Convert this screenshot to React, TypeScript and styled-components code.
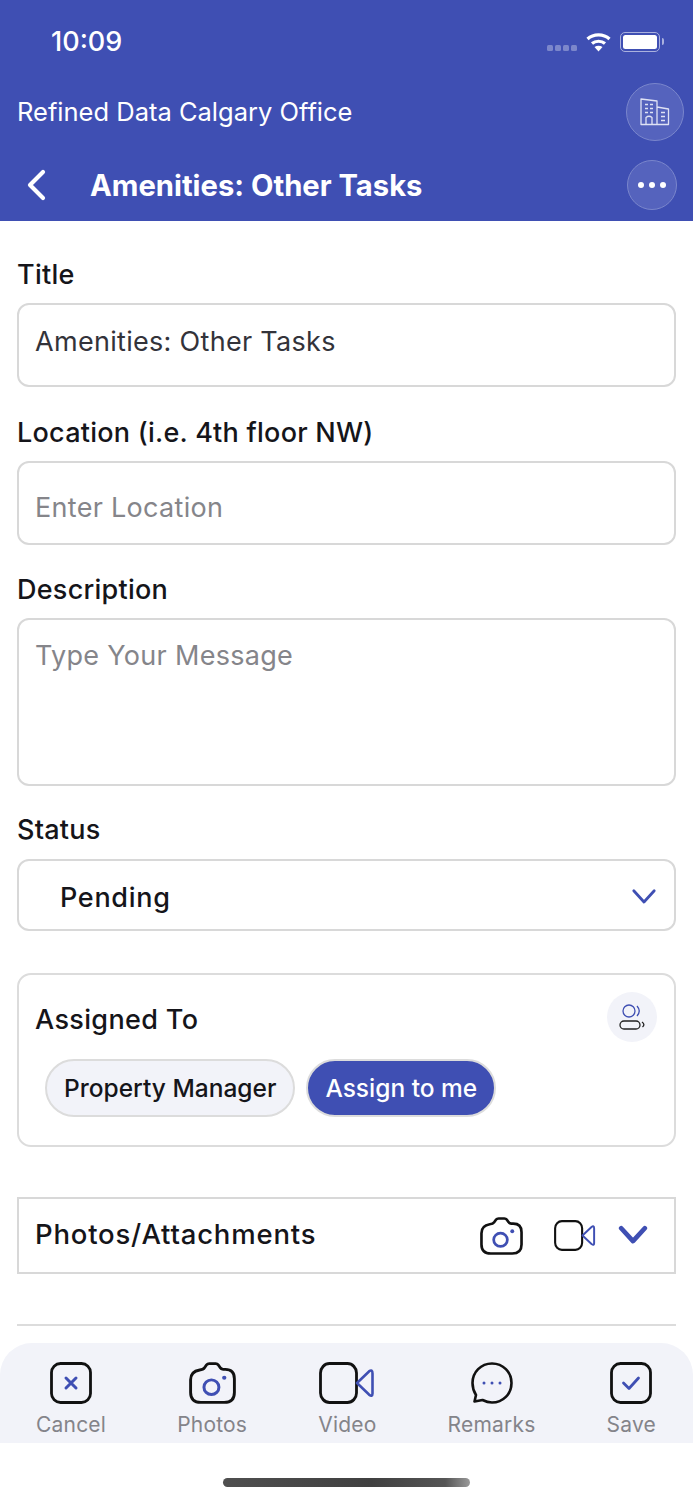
import styled, { createGlobalStyle } from 'styled-components'

const BLUE = '#3f4fb3'

const GlobalStyle = createGlobalStyle`
  html, body {
    margin: 0;
    padding: 0;
    background: #fff;
  }
  * {
    box-sizing: border-box;
  }
`

const CameraIcon = ({ w, h }: { w: number; h: number }) => (
  <svg width={w} height={h} viewBox="0 0 44 40" fill="none" preserveAspectRatio="none">
    <path
      d="M14.5 5.5 L16.5 2.6 Q17.3 1.5 19 1.5 H25 Q26.5 1.5 27.3 2.6 L29.3 5.5 Q30 6.8 32 7 H34 Q42.5 7 42.5 16 V29 Q42.5 38.5 33 38.5 H11 Q1.5 38.5 1.5 29 V17 Q1.5 9 10 7.6 Q13.3 7.4 14.5 5.5 Z"
      stroke="#111"
      strokeWidth="2.7"
      strokeLinejoin="round"
    />
    <circle cx="21" cy="24" r="7" stroke={BLUE} strokeWidth="2.8" />
    <circle cx="33" cy="15" r="2" fill={BLUE} />
  </svg>
)

const VideoIcon = ({ w, h }: { w: number; h: number }) => (
  <svg width={w} height={h} viewBox="0 0 56 40" fill="none" preserveAspectRatio="none">
    <rect x="1.5" y="1.5" width="36" height="37" rx="9" stroke="#111" strokeWidth="2.8" />
    <path
      d="M38 20 L50 9 Q53.5 6.5 53.5 11 V30 Q53.5 33.5 50 31 Z"
      stroke={BLUE}
      strokeWidth="2.6"
      strokeLinejoin="round"
    />
  </svg>
)

const Chevron = ({ size, stroke }: { size: number; stroke: number }) => (
  <svg width={size} height={size * 0.68} viewBox="0 0 28 19" fill="none">
    <path
      d="M3 3 L14 15 L25 3"
      stroke={BLUE}
      strokeWidth={stroke}
      strokeLinecap="round"
      strokeLinejoin="round"
    />
  </svg>
)

const BoxIcon = ({ kind }: { kind: 'x' | 'check' }) => (
  <svg width="42" height="42" viewBox="0 0 42 42" fill="none">
    <rect x="1.5" y="1.5" width="39" height="39" rx="9" stroke="#111" strokeWidth="2.8" />
    {kind === 'x' ? (
      <path d="M16 16 L26 26 M26 16 L16 26" stroke={BLUE} strokeWidth="3" strokeLinecap="round" />
    ) : (
      <path
        d="M13.5 21 L19 26.5 L28.5 16"
        stroke={BLUE}
        strokeWidth="2.8"
        strokeLinecap="round"
        strokeLinejoin="round"
      />
    )}
  </svg>
)

const BubbleIcon = () => (
  <svg width="42" height="42" viewBox="0 0 42 42" fill="none">
    <path
      d="M21 1.5 C32 1.5 40.5 10 40.5 21 C40.5 32 32 40.5 21 40.5 C17.5 40.5 14.5 39.5 11.5 38 L3.5 39.5 L5 33 C2.8 29.5 1.5 25.5 1.5 21 C1.5 10 10 1.5 21 1.5 Z"
      stroke="#111"
      strokeWidth="2.6"
      strokeLinejoin="round"
    />
    <circle cx="13" cy="21" r="1.5" fill={BLUE} />
    <circle cx="21" cy="21" r="1.5" fill={BLUE} />
    <circle cx="29" cy="21" r="1.5" fill={BLUE} />
  </svg>
)

const BuildingIcon = () => (
  <svg width="30" height="29" viewBox="0 0 30 28" fill="none" stroke="#dfe2f4" strokeWidth="1.3">
    <path d="M1 27 V1.5 L17 3.5 V27 Z M17 9.5 L28.5 11.5 V27 H1" strokeLinejoin="round" />
    <path d="M6 27 V20 Q9 17.5 12 20 V27" />
    <path
      d="M5 7 H8 M10 7 H13 M5 11 H8 M10 11 H13 M5 15 H8 M10 15 H13 M21 15 H25 M21 19 H25 M21 23 H25"
      strokeWidth="1.6"
    />
  </svg>
)

const UsersIcon = () => (
  <svg width="28" height="26" viewBox="0 0 28 26" fill="none">
    <ellipse cx="11" cy="7" rx="6" ry="6" stroke={BLUE} strokeWidth="1.3" />
    <path d="M19 2 Q23.5 7 19 12" stroke={BLUE} strokeWidth="1.3" />
    <rect x="2" y="17" width="20" height="8" rx="4" stroke="#222" strokeWidth="1.3" />
    <path d="M24 18 Q27.5 20.5 24.5 23" stroke="#222" strokeWidth="1.3" />
  </svg>
)

const WifiIcon = () => (
  <svg width="27" height="20" viewBox="0 0 26 20" fill="none" stroke="#fff" strokeWidth="3.2">
    <path d="M2 7 C8 1.5 18 1.5 24 7" />
    <path d="M6.5 11.5 C10 8.5 16 8.5 19.5 11.5" />
    <path d="M13 19.5 L9 15 C11.5 13.4 14.5 13.4 17 15 Z" fill="#fff" stroke="none" />
  </svg>
)

const Page = styled.div`
  width: 693px;
  height: 1500px;
  display: flex;
  flex-direction: column;
  background: #fff;
  overflow: hidden;
  font-family: Inter, 'Liberation Sans', sans-serif;
  color: #15151a;
`

const Header = styled.header`
  height: 221px;
  flex: none;
  background: ${BLUE};
  color: #fff;
  display: flex;
  flex-direction: column;
`

const StatusBar = styled.div`
  height: 82px;
  padding: 0 33px 0 51px;
  display: flex;
  align-items: center;
  justify-content: space-between;
`

const Clock = styled.span`
  font-size: 27px;
  font-weight: 500;
`

const StatusIcons = styled.div`
  display: flex;
  align-items: center;
  gap: 8px;
  margin-top: 2px;
`

const SignalDots = styled.div`
  display: flex;
  gap: 2px;
  margin-top: 12px;
`

const SignalDot = styled.i`
  width: 6px;
  height: 6px;
  border-radius: 1.5px;
  background: #7c87cb;
`

const Battery = styled.div`
  width: 40px;
  height: 20px;
  border: 1.5px solid #aab1de;
  border-radius: 5px;
  padding: 2px;
  position: relative;

  &::before {
    content: '';
    display: block;
    height: 100%;
    background: #fff;
    border-radius: 2.5px;
  }

  &::after {
    content: '';
    position: absolute;
    right: -5px;
    top: 5px;
    width: 2px;
    height: 7px;
    border-radius: 0 2px 2px 0;
    background: #aab1de;
  }
`

const OfficeRow = styled.div`
  height: 59px;
  padding: 0 9px 0 17px;
  display: flex;
  align-items: center;
  justify-content: space-between;
`

const OfficeName = styled.span`
  font-size: 25.5px;
  font-weight: 400;
  margin-bottom: 1px;
`

const RoundButton = styled.div<{ $size: number }>`
  width: ${(p) => p.$size}px;
  height: ${(p) => p.$size}px;
  border-radius: 50%;
  background: #5563bd;
  border: 1.5px solid #7a86cc;
  display: flex;
  align-items: center;
  justify-content: center;
  gap: 5px;
`

const NavRow = styled.div`
  height: 50px;
  margin-top: 19px;
  padding: 0 16px 0 26px;
  display: flex;
  align-items: center;
`

const NavTitle = styled.span`
  flex: 1;
  margin-left: 44px;
  font-size: 29.2px;
  font-weight: 700;
`

const Dot = styled.i`
  width: 6px;
  height: 6px;
  border-radius: 50%;
  background: #fff;
`

const Form = styled.main`
  flex: 1;
  padding: 0 17px;
  display: flex;
  flex-direction: column;
`

const Label = styled.div<{ $top: number }>`
  margin-top: ${(p) => p.$top}px;
  height: 38px;
  display: flex;
  align-items: center;
  font-size: 27px;
  font-weight: 500;
  letter-spacing: 0.25px;
  color: #15151a;
`

const Field = styled.div<{ $height: number; $pad: number; $muted?: boolean }>`
  height: ${(p) => p.$height}px;
  margin-top: 10px;
  border: 2px solid #d8d8d8;
  border-radius: 12px;
  padding: ${(p) => p.$pad}px 16px 0;
  font-size: 27px;
  line-height: 36px;
  letter-spacing: 0.3px;
  color: ${(p) => (p.$muted ? '#85858a' : '#33333a')};
`

const SelectField = styled.div`
  height: 72px;
  margin-top: 11px;
  border: 2px solid #d8d8d8;
  border-radius: 12px;
  padding: 4px 17px 0 41px;
  display: flex;
  align-items: center;
  justify-content: space-between;
  font-size: 27px;
  font-weight: 500;
  letter-spacing: 0.7px;
`

const AssignCard = styled.section`
  height: 174px;
  margin-top: 42px;
  border: 2px solid #dcdcdc;
  border-radius: 14px;
  padding: 17px 16px 0;
`

const CardHead = styled.div`
  display: flex;
  align-items: flex-start;
  justify-content: space-between;
`

const CardTitle = styled.div`
  font-size: 27px;
  font-weight: 500;
  line-height: 56px;
  letter-spacing: 0.35px;
`

const UsersButton = styled.div`
  width: 50px;
  height: 50px;
  margin-right: 1px;
  border-radius: 50%;
  background: #f2f3f9;
  display: flex;
  align-items: center;
  justify-content: center;
`

const Chips = styled.div`
  margin: 11px 0 0 10px;
  display: flex;
  gap: 11px;
`

const Chip = styled.div<{ $active?: boolean }>`
  height: 58px;
  padding: 0 17px;
  border-radius: 29px;
  display: flex;
  align-items: center;
  font-size: 24.5px;
  font-weight: 500;
  background: ${(p) => (p.$active ? BLUE : '#f2f3f9')};
  color: ${(p) => (p.$active ? '#fff' : '#15151a')};
  border: 2px solid #dcdcdc;
`

const AttachRow = styled.section`
  height: 77px;
  margin-top: 50px;
  border: 2px solid #d8d8d8;
  padding: 0 26px 0 16px;
  display: flex;
  align-items: center;
`

const AttachTitle = styled.div`
  flex: 1;
  margin-bottom: 3px;
  font-size: 27.5px;
  font-weight: 500;
  letter-spacing: 0.8px;
`

const AttachIcons = styled.div`
  display: flex;
  align-items: center;
`

const VideoSlot = styled.div`
  display: flex;
  margin: 0 22px 0 31px;
`

const Divider = styled.hr`
  margin: 50px 0 0;
  border: 0;
  height: 2px;
  background: #dcdcdc;
`

const TabBar = styled.nav`
  height: 100px;
  flex: none;
  background: #f2f3f9;
  border-radius: 32px 32px 0 0;
  padding: 19px 37px 0 36px;
  display: flex;
  justify-content: space-between;
`

const Tab = styled.div`
  display: flex;
  flex-direction: column;
  align-items: center;
`

const TabIcon = styled.div`
  height: 42px;
  display: flex;
  align-items: center;
`

const TabLabel = styled.span`
  margin-top: 5px;
  font-size: 21px;
  line-height: 32px;
  letter-spacing: 0.2px;
  color: #84848a;
`

const HomeArea = styled.div`
  height: 57px;
  flex: none;
  padding-top: 35px;
  display: flex;
  justify-content: center;
`

const HomeBar = styled.div`
  width: 247px;
  height: 9px;
  border-radius: 5px;
  background: linear-gradient(90deg, #4f4f4f 0%, #404040 60%, #555 90%, #999 100%);
`

export default function App() {
  return (
    <Page>
      <GlobalStyle />
      <Header>
        <StatusBar>
          <Clock>10:09</Clock>
          <StatusIcons>
            <SignalDots>
              <SignalDot />
              <SignalDot />
              <SignalDot />
              <SignalDot />
            </SignalDots>
            <WifiIcon />
            <Battery />
          </StatusIcons>
        </StatusBar>
        <OfficeRow>
          <OfficeName>Refined Data Calgary Office</OfficeName>
          <RoundButton $size={58}>
            <BuildingIcon />
          </RoundButton>
        </OfficeRow>
        <NavRow>
          <svg width="20" height="32" viewBox="0 0 20 32" fill="none">
            <path
              d="M17 3 L4 16 L17 29"
              stroke="#fff"
              strokeWidth="4.2"
              strokeLinecap="round"
              strokeLinejoin="round"
            />
          </svg>
          <NavTitle>Amenities: Other Tasks</NavTitle>
          <RoundButton $size={50}>
            <Dot />
            <Dot />
            <Dot />
          </RoundButton>
        </NavRow>
      </Header>
      <Form>
        <Label $top={34}>Title</Label>
        <Field $height={84} $pad={19}>
          Amenities: Other Tasks
        </Field>
        <Label $top={26}>Location (i.e. 4th floor NW)</Label>
        <Field $height={84} $pad={27} $muted>
          Enter Location
        </Field>
        <Label $top={25}>Description</Label>
        <Field $height={168} $pad={18} $muted>
          Type Your Message
        </Field>
        <Label $top={24}>Status</Label>
        <SelectField>
          Pending
          <Chevron size={26} stroke={3} />
        </SelectField>
        <AssignCard>
          <CardHead>
            <CardTitle>Assigned To</CardTitle>
            <UsersButton>
              <UsersIcon />
            </UsersButton>
          </CardHead>
          <Chips>
            <Chip>Property Manager</Chip>
            <Chip $active>Assign to me</Chip>
          </Chips>
        </AssignCard>
        <AttachRow>
          <AttachTitle>Photos/Attachments</AttachTitle>
          <AttachIcons>
            <CameraIcon w={43} h={38} />
            <VideoSlot>
              <VideoIcon w={42} h={31} />
            </VideoSlot>
            <Chevron size={30} stroke={4.4} />
          </AttachIcons>
        </AttachRow>
        <Divider />
      </Form>
      <TabBar>
        <Tab>
          <TabIcon>
            <BoxIcon kind="x" />
          </TabIcon>
          <TabLabel>Cancel</TabLabel>
        </Tab>
        <Tab>
          <TabIcon>
            <CameraIcon w={47} h={42} />
          </TabIcon>
          <TabLabel>Photos</TabLabel>
        </Tab>
        <Tab>
          <TabIcon>
            <VideoIcon w={56} h={42} />
          </TabIcon>
          <TabLabel>Video</TabLabel>
        </Tab>
        <Tab>
          <TabIcon>
            <BubbleIcon />
          </TabIcon>
          <TabLabel>Remarks</TabLabel>
        </Tab>
        <Tab>
          <TabIcon>
            <BoxIcon kind="check" />
          </TabIcon>
          <TabLabel>Save</TabLabel>
        </Tab>
      </TabBar>
      <HomeArea>
        <HomeBar />
      </HomeArea>
    </Page>
  )
}
